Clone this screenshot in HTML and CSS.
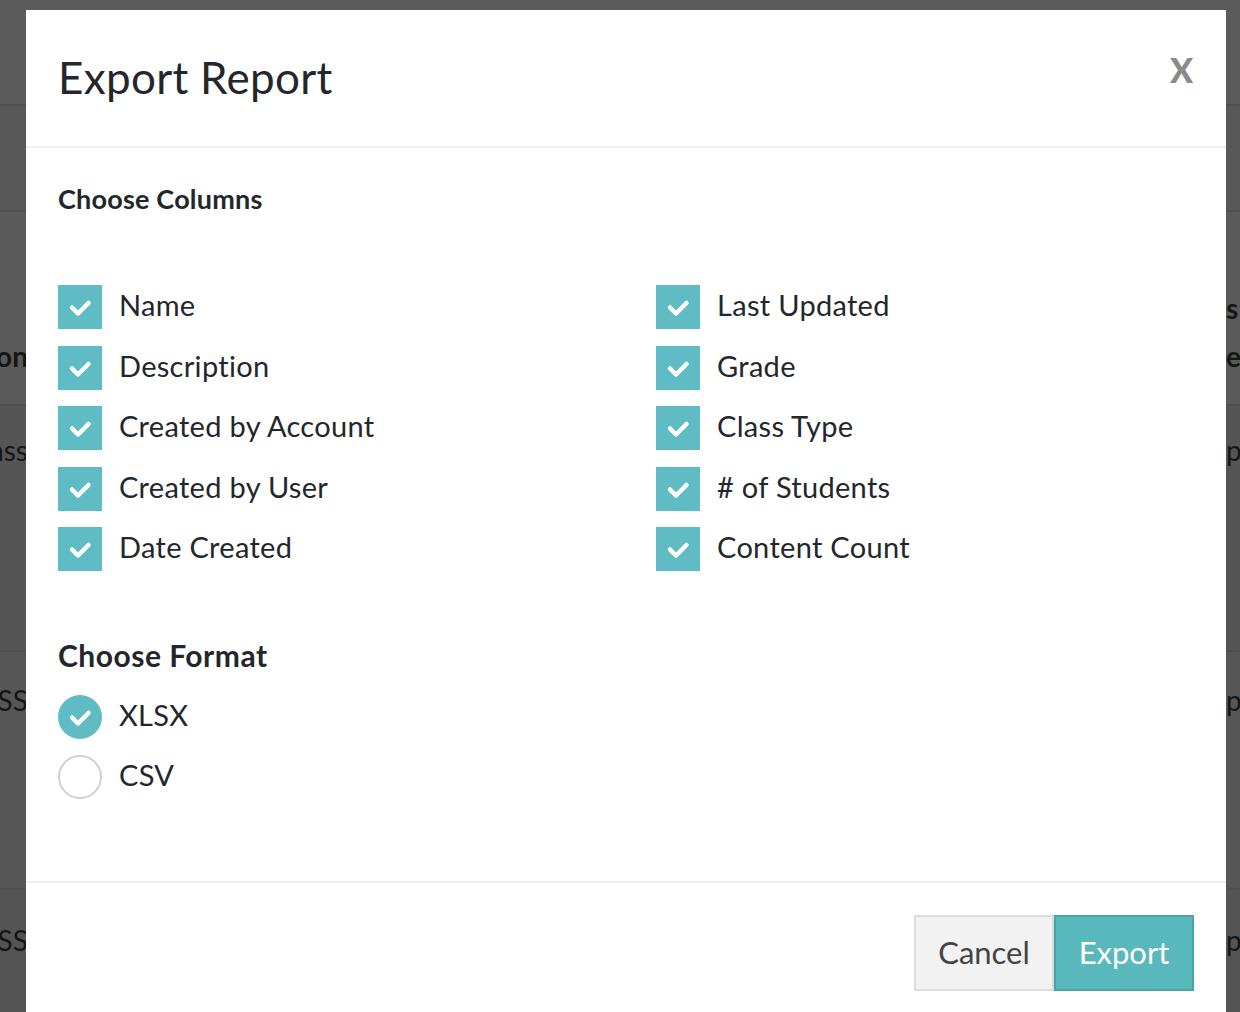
FILE: index.html
```html
<!doctype html>
<html>
<head>
<title>Export Report</title>
<meta charset="utf-8">
<link rel="stylesheet" href="styles.css">
</head>
<body>

<div class="page">
  <div class="band band-top"></div>
  <div class="band band-sub"></div>
  <div class="band band-head">
    <div class="cell-l"><b>&nbsp;<br>Description</b></div>
    <div class="cell-r"><b>s<br>e</b></div>
  </div>
  <div class="band band-row1">
    <div class="cell-l">Class</div>
    <div class="cell-r">pa</div>
  </div>
  <div class="band band-row2">
    <div class="cell-l">CLASS</div>
    <div class="cell-r">pa</div>
  </div>
  <div class="band band-row3">
    <div class="cell-l">CLASS</div>
    <div class="cell-r">pa</div>
  </div>
</div>

<div class="modal">
  <div class="modal-head">
    <h1>Export Report</h1>
    <button class="close" type="button">X</button>
  </div>

  <form class="modal-body">
    <h2>Choose Columns</h2>
    <div class="cols">
      <label class="opt"><span class="box"><svg viewBox="0 0 44 44"><path d="M14 22.5l6 6L30.5 18"/></svg></span><span class="lbl">Name</span></label>
      <label class="opt"><span class="box"><svg viewBox="0 0 44 44"><path d="M14 22.5l6 6L30.5 18"/></svg></span><span class="lbl">Last Updated</span></label>
      <label class="opt"><span class="box"><svg viewBox="0 0 44 44"><path d="M14 22.5l6 6L30.5 18"/></svg></span><span class="lbl">Description</span></label>
      <label class="opt"><span class="box"><svg viewBox="0 0 44 44"><path d="M14 22.5l6 6L30.5 18"/></svg></span><span class="lbl">Grade</span></label>
      <label class="opt"><span class="box"><svg viewBox="0 0 44 44"><path d="M14 22.5l6 6L30.5 18"/></svg></span><span class="lbl">Created by Account</span></label>
      <label class="opt"><span class="box"><svg viewBox="0 0 44 44"><path d="M14 22.5l6 6L30.5 18"/></svg></span><span class="lbl">Class Type</span></label>
      <label class="opt"><span class="box"><svg viewBox="0 0 44 44"><path d="M14 22.5l6 6L30.5 18"/></svg></span><span class="lbl">Created by User</span></label>
      <label class="opt"><span class="box"><svg viewBox="0 0 44 44"><path d="M14 22.5l6 6L30.5 18"/></svg></span><span class="lbl"># of Students</span></label>
      <label class="opt"><span class="box"><svg viewBox="0 0 44 44"><path d="M14 22.5l6 6L30.5 18"/></svg></span><span class="lbl">Date Created</span></label>
      <label class="opt"><span class="box"><svg viewBox="0 0 44 44"><path d="M14 22.5l6 6L30.5 18"/></svg></span><span class="lbl">Content Count</span></label>
    </div>

    <h2 class="fmt">Choose Format</h2>
    <div class="radios">
      <label class="opt"><span class="radio on"><svg viewBox="0 0 44 44"><path d="M14 22.5l6 6L30.5 18"/></svg></span><span class="lbl">XLSX</span></label>
      <label class="opt"><span class="radio"></span><span class="lbl">CSV</span></label>
    </div>
  </form>

  <div class="modal-foot">
    <button class="btn btn-cancel" type="button">Cancel</button>
    <button class="btn btn-export" type="button">Export</button>
  </div>
</div>

</body>
</html>
```

FILE: styles.css
```css
html, body {
	margin: 0;
	height: 100%;
	overflow: hidden;
}
body {
	background: #545454;
	font-family: Lato, "Open Sans", sans-serif;
	color: #23272b;
}

/* page behind the dialog */
.page {
	font-size: 28px;
	line-height: 48px;
	color: #151515;
}
.band {
	display: flex;
	justify-content: space-between;
	box-sizing: border-box;
	border-bottom: 2px solid #4f4f4f;
}
.band-top { height: 106px; background: #5b5b5b; }
.band-sub { height: 106px; background: #585858; }
.band-head { height: 194px; background: #5a5a5a; padding-top: 72px; }
.band-row1 { height: 246px; background: #555555; padding-top: 20px; }
.band-row2 { height: 238px; background: #565656; padding-top: 24px; }
.band-row3 { height: 300px; background: #545454; padding-top: 26px; border: 0; }
.cell-l {
	width: 28px;
	display: flex;
	justify-content: flex-end;
	overflow: hidden;
	white-space: nowrap;
}
.cell-r {
	width: 14px;
	white-space: nowrap;
	overflow: hidden;
	padding-left: 1px;
}

/* dialog */
.modal {
	position: absolute;
	left: 26px;
	top: 10px;
	width: 1200px;
	background: #fff;
}
.modal-head {
	height: 136px;
	display: flex;
	align-items: center;
	justify-content: space-between;
	padding: 0 33px 0 32px;
	border-bottom: 2px solid #f0f0f0;
}
.modal-head h1 {
	margin: 0 0 3px 0;
	font-size: 44px;
	font-weight: normal;
	letter-spacing: 0.3px;
}
.close {
	border: 0;
	background: none;
	padding: 0;
	margin-top: -16px;
	font-family: Lato, sans-serif;
	font-size: 34px;
	font-weight: 900;
	color: #8a8a8a;
	line-height: 1;
}

.modal-body {
	padding: 35px 32px 82px 32px;
	border-bottom: 2px solid #f0f0f0;
}
.modal-body h2 {
	margin: 0;
	font-size: 27px;
	line-height: 32px;
	font-weight: bold;
	letter-spacing: 0.2px;
}
.modal-body h2.fmt {
	margin-top: 68px;
	font-size: 30px;
	letter-spacing: 0.5px;
}
.cols {
	margin-top: 70px;
	display: grid;
	grid-template-columns: 598px 1fr;
	row-gap: 16.5px;
}
.radios {
	margin-top: 24px;
	display: grid;
	row-gap: 16px;
}
.opt {
	display: flex;
	align-items: center;
	gap: 17px;
	font-size: 29px;
	letter-spacing: 0.3px;
	height: 44px;
}
.lbl {
	margin-bottom: 5px;
}
.box, .radio {
	width: 44px;
	height: 44px;
	flex: none;
	box-sizing: border-box;
	background: #5fbcc4;
}
.radio {
	border-radius: 50%;
	background: #fff;
	border: 2px solid #d6d0cd;
}
.radio.on {
	background: #5fbcc4;
	border: 0;
}
.box svg, .radio svg {
	display: block;
	width: 44px;
	height: 44px;
}
.box path, .radio path {
	fill: none;
	stroke: #fff;
	stroke-width: 4.5;
	stroke-linecap: round;
	stroke-linejoin: round;
}

.modal-foot {
	display: flex;
	justify-content: flex-end;
	padding: 32px 32px 32px 32px;
}
.btn {
	width: 140px;
	height: 76px;
	box-sizing: border-box;
	font-family: Lato, sans-serif;
	font-size: 31px;
	border: 2px solid #dcdcdc;
	background: #f2f2f2;
	color: #444;
	padding: 0 0 3px 0;
}
.btn-export {
	background: #58b8bb;
	border-color: #4aa3a6;
	color: #fff;
}
```
